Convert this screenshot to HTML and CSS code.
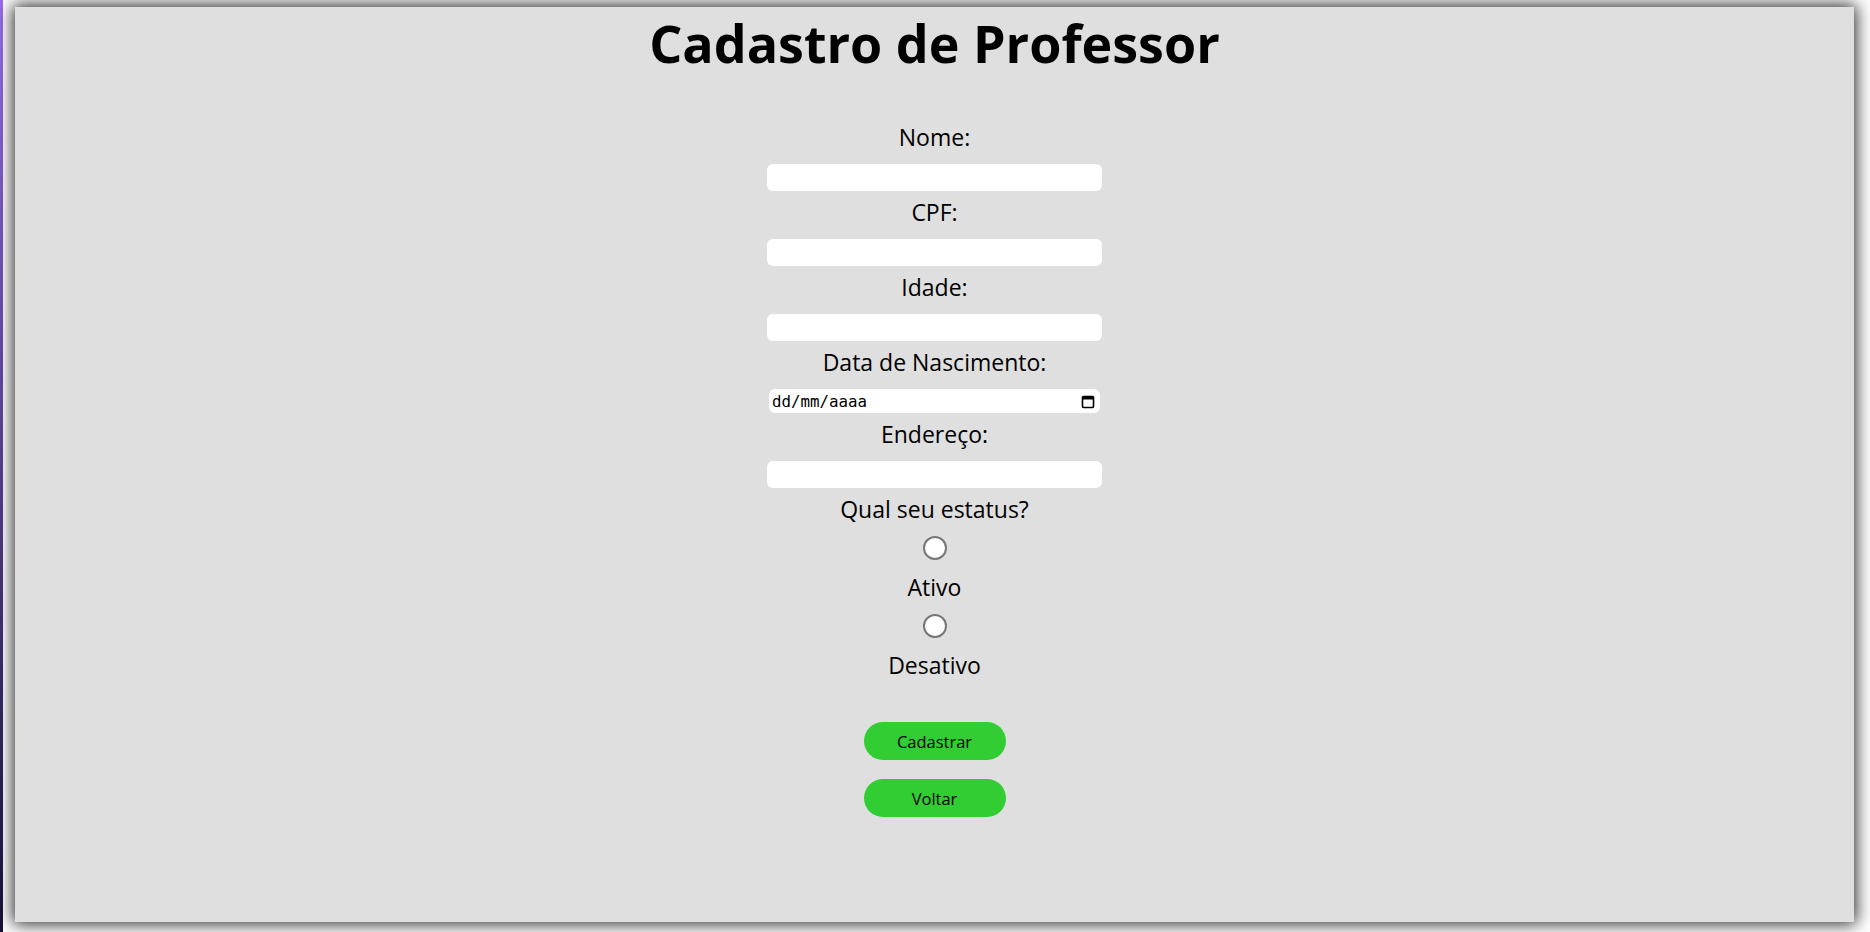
FILE: index.html
```html
<!DOCTYPE html>
<html lang="pt-BR">
<head>
<meta charset="utf-8">
<title>Cadastro de Professor</title>
<link rel="stylesheet" href="styles.css">
</head>
<body>
<main class="page">
  <h1 class="title">Cadastro de Professor</h1>
  <form class="form">
    <label class="label" for="nome">Nome:</label>
    <input class="field" id="nome" type="text">
    <label class="label" for="cpf">CPF:</label>
    <input class="field" id="cpf" type="text">
    <label class="label" for="idade">Idade:</label>
    <input class="field" id="idade" type="text">
    <label class="label" for="nasc">Data de Nascimento:</label>
    <div class="date-field">
      <input class="date-input" id="nasc" type="text" placeholder="dd/mm/aaaa">
      <svg class="cal-icon" width="14" height="15" viewBox="0 0 14 15" aria-hidden="true">
        <rect x="1.5" y="2.5" width="11" height="11" rx="1" fill="none" stroke="#000" stroke-width="1.6"/>
        <rect x="1.5" y="2.5" width="11" height="3" fill="#000"/>
      </svg>
    </div>
    <label class="label" for="end">Endereço:</label>
    <input class="field" id="end" type="text">
    <span class="label">Qual seu estatus?</span>
    <input class="radio" id="ativo" type="radio" name="status">
    <label class="label label-opt" for="ativo">Ativo</label>
    <input class="radio" id="desativo" type="radio" name="status">
    <label class="label label-opt" for="desativo">Desativo</label>
    <button class="btn btn-first" type="button">Cadastrar</button>
    <button class="btn" type="button">Voltar</button>
  </form>
</main>
</body>
</html>
```
FILE: styles.css
```css
html {
  background: linear-gradient(#9a6cf2, #17123a) no-repeat left top / 3px 100%, #ffffff;
}

body {
  margin: 0;
  font-family: "Open Sans", "Liberation Sans", sans-serif;
  color: #000;
}

.page {
  margin: 7px 16px 10px 15px;
  height: 915px;
  background: #dfdfdf;
  box-shadow: 0 0 16px 2px rgba(0, 0, 0, 0.85);
  box-sizing: border-box;
  overflow: hidden;
}

.title {
  margin: 0;
  font-size: 52px;
  font-weight: 700;
  line-height: normal;
  text-align: center;
}

.form {
  margin-top: 44px;
  display: flex;
  flex-direction: column;
  align-items: center;
}

.label {
  display: block;
  font-size: 23px;
  line-height: 30px;
  margin: 6px 0 12px;
  text-align: center;
}

.form > .label:first-child {
  margin-top: 0;
}

.label-opt {
  margin: 0;
}

.field {
  width: 335px;
  height: 27px;
  border: none;
  border-radius: 6px;
  background: #fff;
  padding: 0 4px;
  box-sizing: border-box;
  font-family: "Open Sans", sans-serif;
  font-size: 15px;
  outline: none;
}

.date-field {
  width: 331px;
  height: 24px;
  background: #fff;
  border-radius: 6px;
  display: flex;
  align-items: center;
  padding: 0 5px 0 3px;
  box-sizing: border-box;
}

.date-input {
  flex: 1;
  min-width: 0;
  border: none;
  background: transparent;
  padding: 0;
  font-family: "DejaVu Sans Mono", "Liberation Mono", monospace;
  font-size: 15.8px;
  outline: none;
}

.date-input::placeholder {
  color: #000;
  opacity: 1;
}

.cal-icon {
  display: block;
  flex: none;
}

.radio {
  appearance: none;
  -webkit-appearance: none;
  width: 24px;
  height: 24px;
  margin: 0 0 12px;
  border: 2px solid #777;
  border-radius: 50%;
  background: #fff;
  box-sizing: border-box;
}

.label + .radio {
  margin-top: 0;
}

.label-opt + .radio {
  margin-top: 12px;
}

.btn {
  width: 142px;
  height: 38px;
  border: none;
  border-radius: 19px;
  background: #32cd32;
  color: #000;
  font-family: "Open Sans", sans-serif;
  font-size: 16.5px;
  margin-top: 19px;
  padding: 0;
}

.btn-first {
  margin-top: 42px;
}
```
